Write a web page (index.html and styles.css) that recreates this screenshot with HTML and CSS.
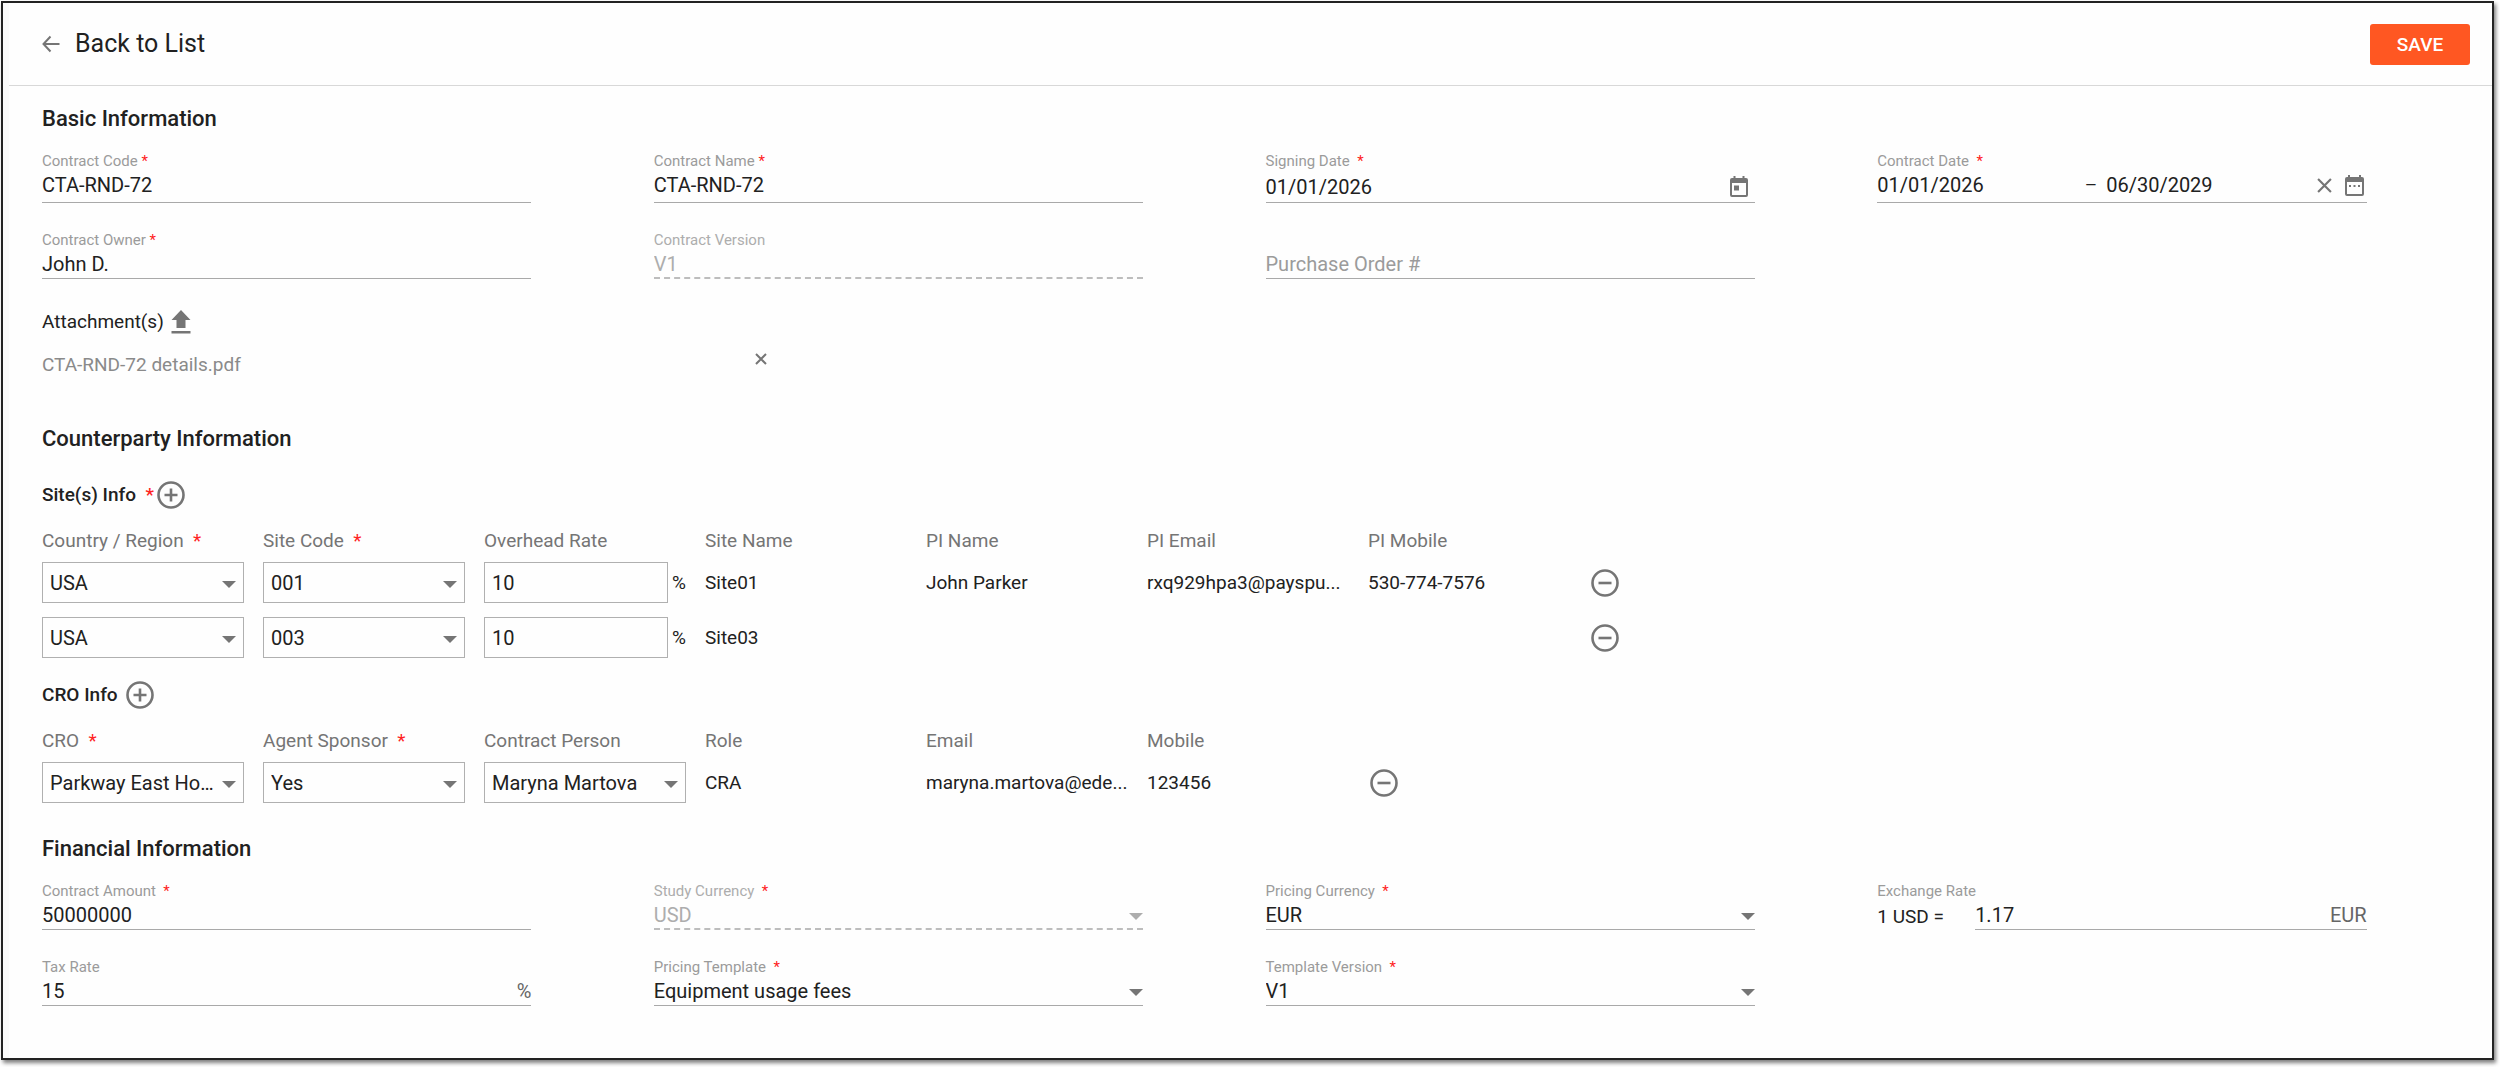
FILE: index.html
```html
<!DOCTYPE html>
<html lang="en">
<head>
    <meta charset="UTF-8">
    <meta name="viewport" content="width=device-width, initial-scale=1.0">
    <title>Contract</title>
    <link rel="stylesheet" href="styles.css">
</head>
<body>
    <form class="page">
        <header class="header">
            <a href="#" class="back">
                <svg class="icon-back" viewBox="0 0 18 18"><path d="M17.5 9H1.5M8.5 1.5L1.5 9l7 7.5"/></svg>
                Back to List
            </a>
            <button type="submit" class="save">SAVE</button>
        </header>

        <main class="content">
            <h2>Basic Information</h2>
            <div class="fields fields-basic">
                <div class="field tall">
                    <label for="code">Contract Code <span class="star">*</span></label>
                    <div class="control"><input type="text" id="code" value="CTA-RND-72"></div>
                </div>
                <div class="field tall">
                    <label for="name">Contract Name <span class="star">*</span></label>
                    <div class="control"><input type="text" id="name" value="CTA-RND-72"></div>
                </div>
                <div class="field tall">
                    <label for="signing">Signing Date&nbsp; <span class="star">*</span></label>
                    <div class="control calendar">
                        <input type="text" id="signing" value="01/01/2026">
                        <button type="button" class="icon-button" aria-label="Open calendar">
                            <svg class="icon-date" viewBox="0 0 18 22"><path class="fill" fill-rule="evenodd" d="M3.5 0h2v2h7V0h2v2H16a2 2 0 0 1 2 2v15a2 2 0 0 1-2 2H2a2 2 0 0 1-2-2V4a2 2 0 0 1 2-2h1.500zM2 7v12h14V7zM4 9.500h5v5H4z"/></svg>
                        </button>
                    </div>
                </div>
                <div class="field tall">
                    <label for="start">Contract Date&nbsp; <span class="star">*</span></label>
                    <div class="control">
                        <input type="text" id="start" value="01/01/2026">
                        <span class="dash">–</span>
                        <input type="text" aria-label="Contract end date" value="06/30/2029">
                        <button type="button" class="icon-button clear" aria-label="Clear dates">
                            <svg class="icon-clear" viewBox="0 0 14 14"><path d="M1 1l12 12M13 1L1 13"/></svg>
                        </button>
                        <button type="button" class="icon-button" aria-label="Open calendar">
                            <svg class="icon-range" viewBox="0 0 19 21"><path class="fill" fill-rule="evenodd" d="M3 0h2v2h9V0h2v2h1a2 2 0 0 1 2 2v15a2 2 0 0 1-2 2H2a2 2 0 0 1-2-2V4a2 2 0 0 1 2-2h1zM2 7v12h15V7zM4 10h2v2H4zM8.500 10h2v2h-2zM13 10h2v2h-2z"/></svg>
                        </button>
                    </div>
                </div>
                <div class="field">
                    <label for="owner">Contract Owner <span class="star">*</span></label>
                    <div class="control"><input type="text" id="owner" value="John D."></div>
                </div>
                <div class="field disabled">
                    <label for="version">Contract Version</label>
                    <div class="control"><input type="text" id="version" value="V1" disabled></div>
                </div>
                <div class="field no-label">
                    <div class="control"><input type="text" aria-label="Purchase Order #" placeholder="Purchase Order #"></div>
                </div>
            </div>

            <div class="attachments">
                <span>Attachment(s)</span>
                <button type="button" class="icon-button" aria-label="Upload attachment">
                    <svg class="icon-upload" viewBox="0 0 20 24"><path class="fill" d="M10 0l9.500 10H14.500v8h-9v-8H.5zM.5 21h19v2.500H.5z"/></svg>
                </button>
            </div>
            <div class="file">
                <span>CTA-RND-72 details.pdf</span>
                <button type="button" class="icon-button" aria-label="Remove file">
                    <svg class="icon-remove" viewBox="0 0 12 12"><path d="M1 1l10 10M11 1L1 11"/></svg>
                </button>
            </div>

            <h2 class="counterparty">Counterparty Information</h2>
            <div class="subtitle">
                <h3>Site(s) Info&nbsp; <span class="star">*</span></h3>
                <button type="button" class="icon-button" aria-label="Add site">
                    <svg class="icon-circle" viewBox="0 0 28 28"><circle cx="14" cy="14" r="12.500"/><path d="M7.500 14h13M14 7.500v13"/></svg>
                </button>
            </div>
            <table>
                <thead>
                    <tr>
                        <th>Country / Region&nbsp; <span class="star">*</span></th>
                        <th>Site Code&nbsp; <span class="star">*</span></th>
                        <th>Overhead Rate</th>
                        <th>Site Name</th>
                        <th>PI Name</th>
                        <th>PI Email</th>
                        <th>PI Mobile</th>
                        <td></td>
                    </tr>
                </thead>
                <tbody>
                    <tr>
                        <td><div class="box arrow"><select aria-label="Country / Region"><option>USA</option></select></div></td>
                        <td><div class="box arrow"><select aria-label="Site Code"><option>001</option><option>003</option></select></div></td>
                        <td><div class="rate"><div class="box"><input type="text" aria-label="Overhead Rate" value="10"></div>%</div></td>
                        <td>Site01</td>
                        <td>John Parker</td>
                        <td>rxq929hpa3@payspu...</td>
                        <td>530-774-7576</td>
                        <td>
                            <button type="button" class="icon-button" aria-label="Remove site">
                                <svg class="icon-circle" viewBox="0 0 28 28"><circle cx="14" cy="14" r="12.500"/><path d="M7.500 14h13"/></svg>
                            </button>
                        </td>
                    </tr>
                    <tr>
                        <td><div class="box arrow"><select aria-label="Country / Region"><option>USA</option></select></div></td>
                        <td><div class="box arrow"><select aria-label="Site Code"><option>003</option><option>001</option></select></div></td>
                        <td><div class="rate"><div class="box"><input type="text" aria-label="Overhead Rate" value="10"></div>%</div></td>
                        <td>Site03</td>
                        <td></td>
                        <td></td>
                        <td></td>
                        <td>
                            <button type="button" class="icon-button" aria-label="Remove site">
                                <svg class="icon-circle" viewBox="0 0 28 28"><circle cx="14" cy="14" r="12.500"/><path d="M7.500 14h13"/></svg>
                            </button>
                        </td>
                    </tr>
                </tbody>
            </table>

            <div class="subtitle cro">
                <h3>CRO Info</h3>
                <button type="button" class="icon-button" aria-label="Add CRO">
                    <svg class="icon-circle" viewBox="0 0 28 28"><circle cx="14" cy="14" r="12.500"/><path d="M7.500 14h13M14 7.500v13"/></svg>
                </button>
            </div>
            <table>
                <thead>
                    <tr>
                        <th>CRO&nbsp; <span class="star">*</span></th>
                        <th>Agent Sponsor&nbsp; <span class="star">*</span></th>
                        <th>Contract Person</th>
                        <th>Role</th>
                        <th>Email</th>
                        <th>Mobile</th>
                        <td></td>
                    </tr>
                </thead>
                <tbody>
                    <tr>
                        <td><div class="box arrow"><select aria-label="CRO"><option>Parkway East Hospital</option></select></div></td>
                        <td><div class="box arrow"><select aria-label="Agent Sponsor"><option>Yes</option><option>No</option></select></div></td>
                        <td><div class="box arrow"><select aria-label="Contract Person"><option>Maryna Martova</option></select></div></td>
                        <td>CRA</td>
                        <td>maryna.martova@ede...</td>
                        <td>123456</td>
                        <td>
                            <button type="button" class="icon-button" aria-label="Remove CRO">
                                <svg class="icon-circle" viewBox="0 0 28 28"><circle cx="14" cy="14" r="12.500"/><path d="M7.500 14h13"/></svg>
                            </button>
                        </td>
                    </tr>
                </tbody>
            </table>

            <h2 class="financial">Financial Information</h2>
            <div class="fields">
                <div class="field">
                    <label for="amount">Contract Amount&nbsp; <span class="star">*</span></label>
                    <div class="control"><input type="text" id="amount" value="50000000"></div>
                </div>
                <div class="field disabled">
                    <label for="study-currency">Study Currency&nbsp; <span class="star">*</span></label>
                    <div class="control arrow"><select id="study-currency" disabled><option>USD</option></select></div>
                </div>
                <div class="field">
                    <label for="pricing-currency">Pricing Currency&nbsp; <span class="star">*</span></label>
                    <div class="control arrow"><select id="pricing-currency"><option>EUR</option><option>USD</option></select></div>
                </div>
                <div class="field">
                    <label for="rate">Exchange Rate</label>
                    <div class="exchange">
                        <span class="base">1 USD =</span>
                        <div class="control"><input type="text" id="rate" value="1.17"><span class="unit">EUR</span></div>
                    </div>
                </div>
                <div class="field">
                    <label for="tax">Tax Rate</label>
                    <div class="control"><input type="text" id="tax" value="15"><span class="unit">%</span></div>
                </div>
                <div class="field">
                    <label for="template">Pricing Template&nbsp; <span class="star">*</span></label>
                    <div class="control arrow"><select id="template"><option>Equipment usage fees</option></select></div>
                </div>
                <div class="field">
                    <label for="template-version">Template Version&nbsp; <span class="star">*</span></label>
                    <div class="control arrow"><select id="template-version"><option>V1</option></select></div>
                </div>
            </div>
        </main>
    </form>
</body>
</html>
```

FILE: styles.css
```css
* {
    box-sizing: border-box;
}
body {
    margin: 0;
    padding: 1px 6px 7px 1px;
    background-color: white;
    color: #212121;
    font-family: Roboto, sans-serif;
    font-size: 19px;
    line-height: 28px;
}
.page {
    border: 2px solid #222;
    background: linear-gradient(to right, #fafafa 6px, #fefefe 6px);
    box-shadow: 2px 3px 4px rgba(0, 0, 0, 0.5);
}
.header {
    display: flex;
    align-items: center;
    justify-content: space-between;
    height: 83px;
    margin-left: 6px;
    padding: 0 22px 0 33px;
    border-bottom: 1px solid #d8d8d8;
}
.back {
    display: flex;
    align-items: center;
    gap: 15px;
    color: #212121;
    font-size: 25px;
    text-decoration: none;
}
.save {
    width: 100px;
    height: 41px;
    padding: 0;
    border: none;
    border-radius: 3px;
    background-color: #ff5722;
    color: white;
    font-family: inherit;
    font-size: 19px;
    font-weight: 500;
    cursor: pointer;
}
.content {
    padding: 19px 3px 52px 39px;
}
h2 {
    margin: 0 0 18px;
    font-size: 22px;
    font-weight: 500;
}
h3 {
    margin: 0;
    font-size: 19px;
    font-weight: 500;
}
.star {
    color: #f22;
}

/* underlined fields, four to a row */
.fields {
    display: grid;
    grid-template-columns: repeat(4, 1fr);
    row-gap: 27px;
}
.field {
    display: flex;
    flex-direction: column;
    width: 80%;
}
.field label {
    color: #9b9b9b;
    font-size: 15px;
    line-height: 20px;
}
.no-label {
    justify-content: flex-end;
}
.control {
    display: flex;
    align-items: center;
    height: 29px;
    border-bottom: 1px solid #a9a9a9;
}
.tall .control {
    height: 32px;
    padding-bottom: 3px;
}
.tall .calendar {
    padding-bottom: 0;
}
input,
select {
    width: 100%;
    min-width: 0;
    height: 100%;
    padding: 0;
    border: none;
    outline: none;
    background: none;
    color: #212121;
    font-family: inherit;
    font-size: 20px;
    appearance: none;
}
input::placeholder {
    color: #9b9b9b;
}
select {
    padding-right: 20px;
    text-overflow: ellipsis;
    opacity: 1;
}
.disabled .control {
    border-bottom: 2px dashed #bdbdbd;
}
.disabled label,
.disabled input,
.disabled select {
    color: #adadad;
}
.dash {
    padding: 0 9px;
}
.unit {
    color: #666;
    font-size: 20px;
}

/* drop-down triangle */
.arrow {
    position: relative;
}
.arrow::after {
    content: "";
    position: absolute;
    top: 50%;
    right: 0;
    margin-top: -2px;
    border: 7px solid transparent;
    border-top-color: #757575;
    border-bottom: none;
    pointer-events: none;
}
.disabled .arrow::after {
    border-top-color: #adadad;
}
.exchange {
    display: grid;
    grid-template-columns: 1fr 4fr;
}
.base {
    padding-top: 3px;
    line-height: 26px;
}

/* attachments */
.attachments {
    display: flex;
    align-items: center;
    gap: 7px;
    margin-top: 29px;
}
.file {
    display: flex;
    align-items: flex-start;
    justify-content: space-between;
    width: 725px;
    margin-top: 15px;
    color: #8a8a8a;
}
.subtitle {
    display: flex;
    align-items: center;
    gap: 3px;
    margin-bottom: 18px;
}
.counterparty {
    margin: 46px 0 28px;
}
.cro {
    gap: 8px;
    margin-top: 16px;
}
.financial {
    margin-top: 25px;
}

/* sites and CRO tables */
table {
    border-collapse: collapse;
    table-layout: fixed;
    width: 1768px;
}
.cro + table {
    width: 1547px;
}
th,
td {
    padding: 0 19px 0 0;
    overflow: hidden;
    text-align: left;
    text-overflow: ellipsis;
    white-space: nowrap;
}
th {
    color: #757575;
    font-weight: 400;
}
tbody tr {
    height: 55px;
}
.box {
    height: 41px;
    border: 1px solid #b0b0b0;
    padding: 0 7px;
}
.box.arrow::after {
    right: 7px;
}
.rate {
    display: flex;
    align-items: center;
    justify-content: space-between;
}
.rate .box {
    width: 184px;
}

/* icons */
.icon-button {
    display: flex;
    padding: 0;
    border: none;
    background: none;
    cursor: pointer;
}
.clear {
    margin-left: 12px;
}
svg {
    display: block;
    fill: none;
    stroke: #757575;
    stroke-width: 2;
}
.fill {
    fill: #757575;
    stroke: none;
}
.icon-back {
    width: 18px;
    height: 20px;
}
.icon-date {
    width: 18px;
    height: 22px;
    margin-right: 7px;
}
.icon-clear {
    width: 15px;
    height: 15px;
}
.icon-range {
    width: 19px;
    height: 21px;
    margin: 0 3px 0 13px;
}
.icon-upload {
    width: 20px;
    height: 24px;
}
.icon-remove {
    width: 12px;
    height: 12px;
    margin-top: 2px;
}
.icon-circle {
    width: 28px;
    height: 28px;
    stroke-width: 2.6;
}
td .icon-circle {
    margin-left: 2px;
}
```
